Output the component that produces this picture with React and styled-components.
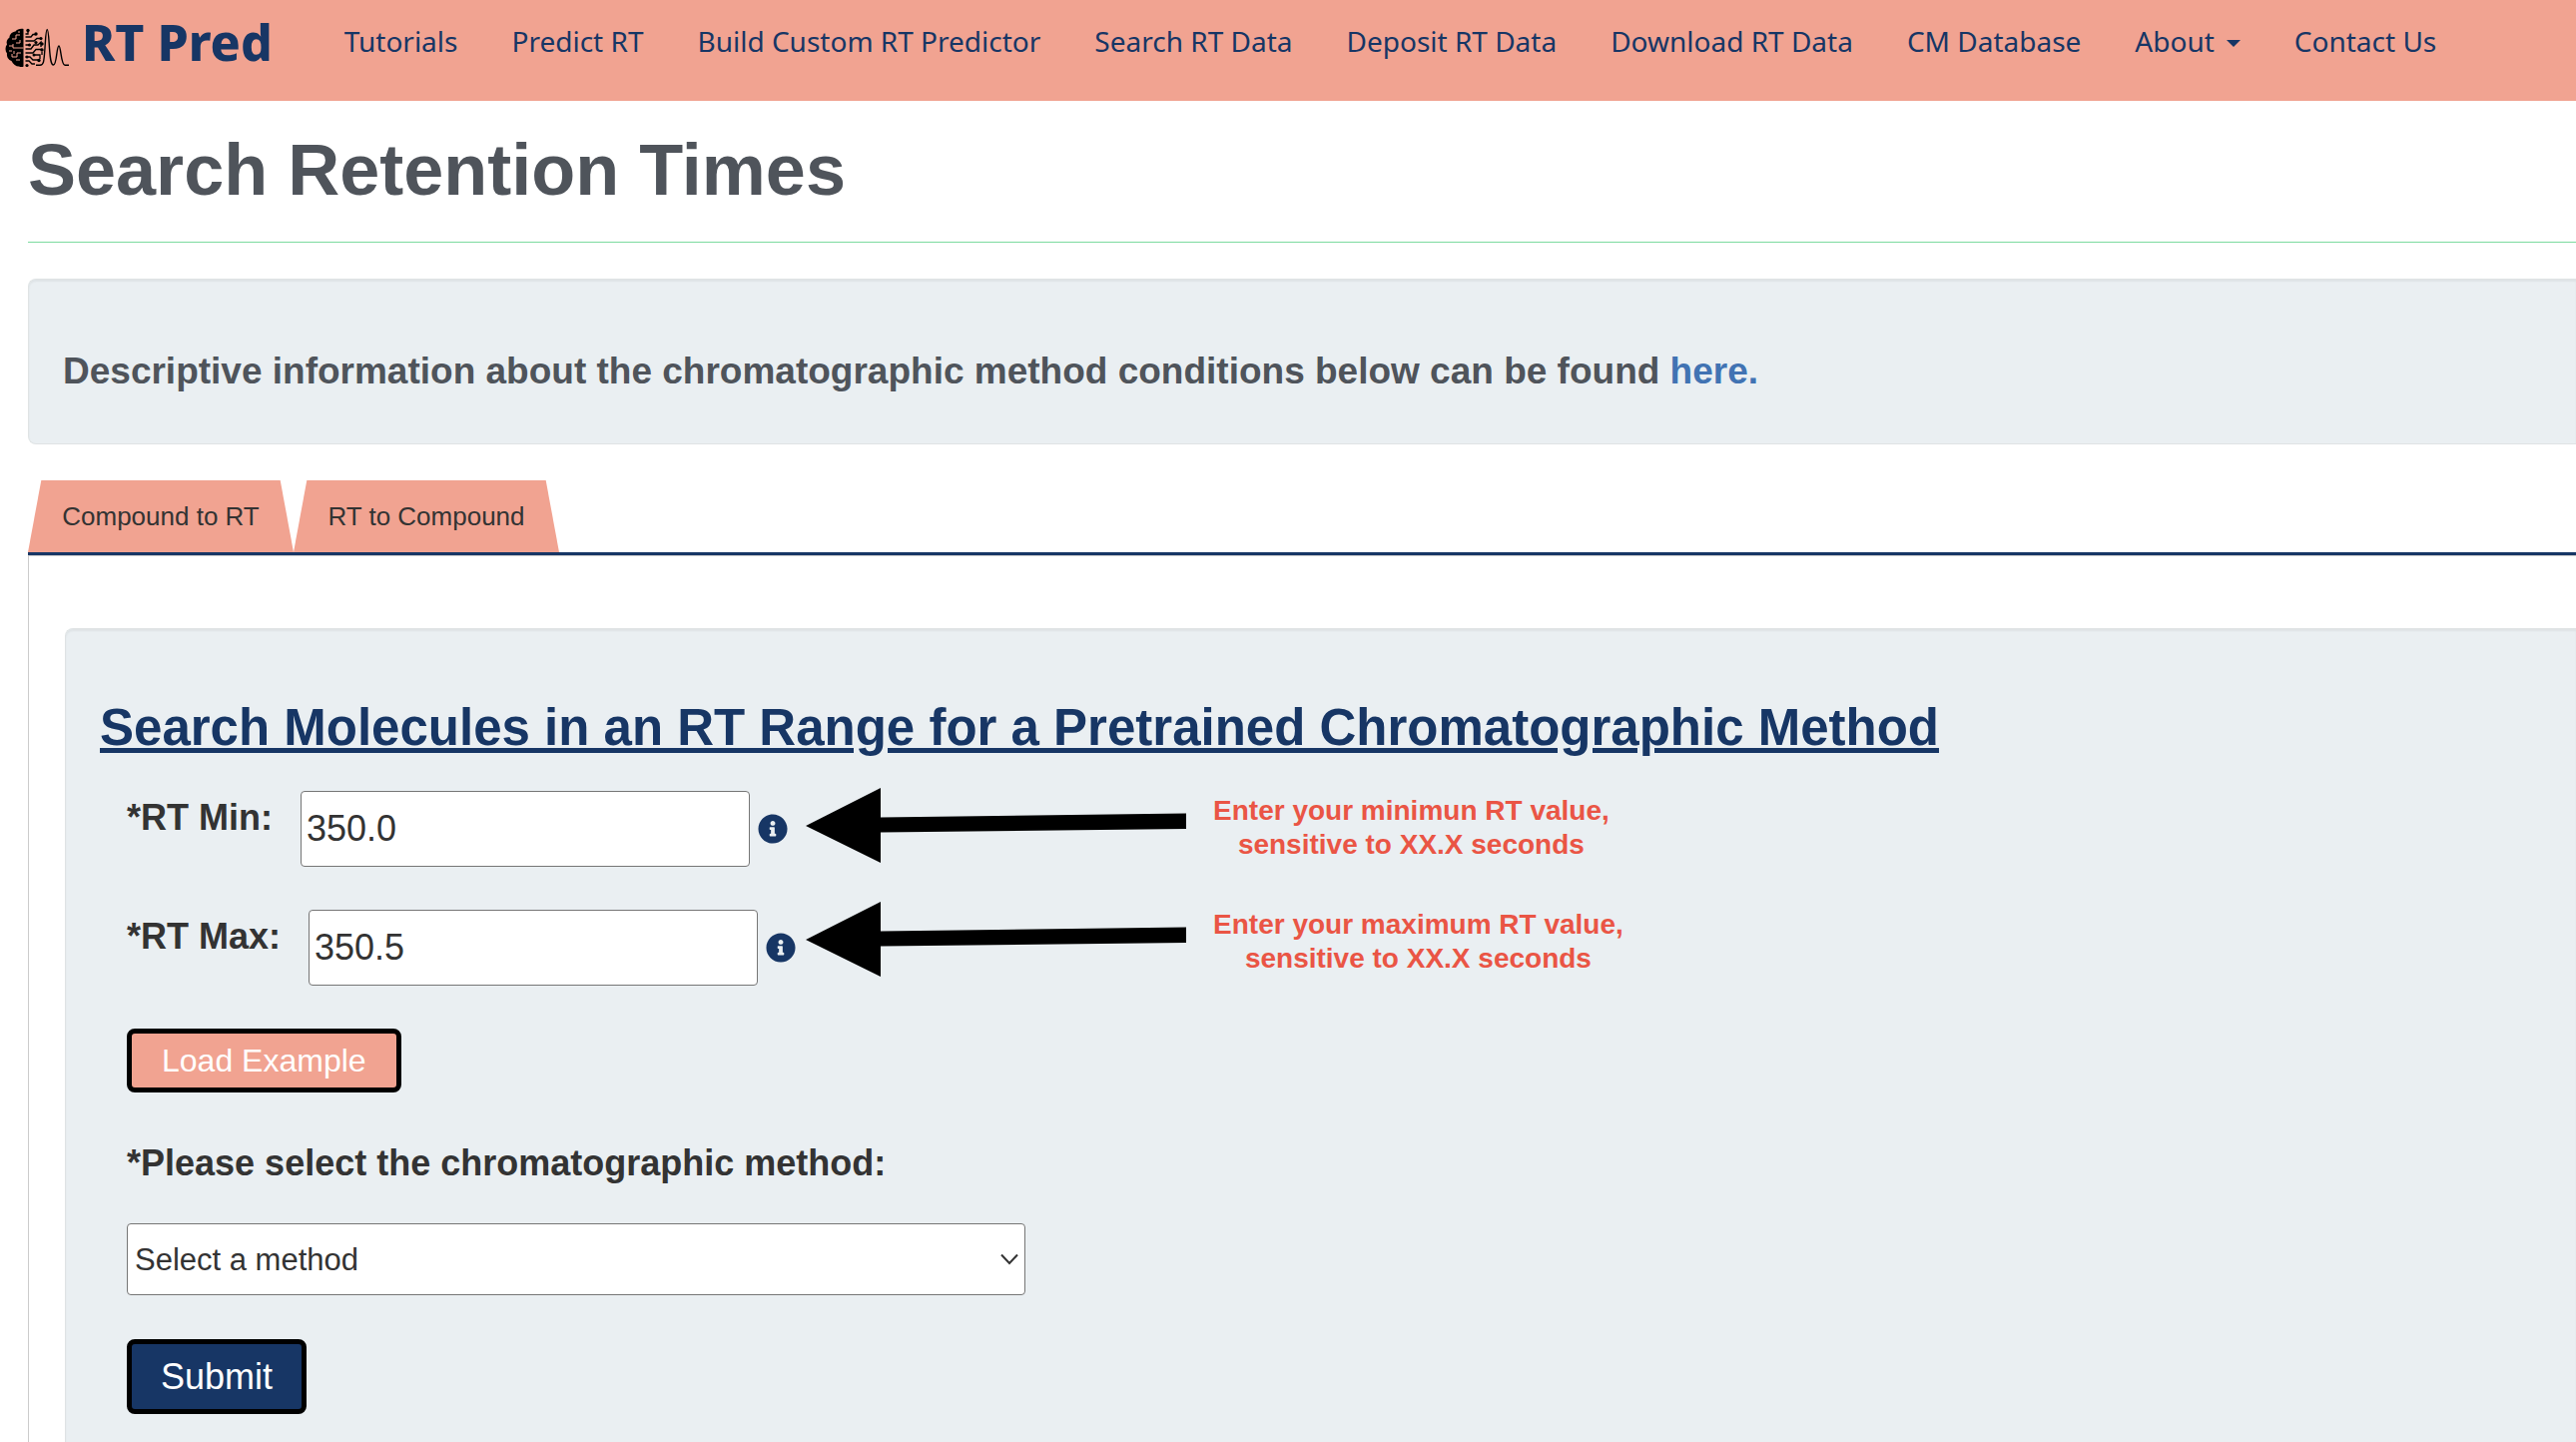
import styled, { createGlobalStyle } from "styled-components";
import { FaInfoCircle } from "react-icons/fa";

const links = [
    "Tutorials",
    "Predict RT",
    "Build Custom RT Predictor",
    "Search RT Data",
    "Deposit RT Data",
    "Download RT Data",
    "CM Database",
    "About",
    "Contact Us",
];

export default function App() {
    return (
        <>
            <GlobalStyle />
            <Page>
                <Header>
                    <Brand href="#">
                        <Logo />
                        RT Pred
                    </Brand>
                    <Nav>
                        {links.map((label) => (
                            <NavLink href="#" key={label}>
                                {label}
                                {label === "About" && <Caret />}
                            </NavLink>
                        ))}
                    </Nav>
                </Header>

                <Main>
                    <Title>Search Retention Times</Title>
                    <Divider />

                    <Info>
                        Descriptive information about the chromatographic method conditions below can be found <a href="#">here.</a>
                    </Info>

                    <Tabs role="tablist">
                        <Tab role="tab">Compound to RT</Tab>
                        <Tab role="tab">RT to Compound</Tab>
                    </Tabs>

                    <Panel role="tabpanel">
                        <Search>
                            <Subtitle>Search Molecules in an RT Range for a Pretrained Chromatographic Method</Subtitle>

                            <Form onSubmit={(e) => e.preventDefault()}>
                                <Range>
                                    <Fields>
                                        <Field>
                                            <Label htmlFor="rt-min">*RT Min:</Label>
                                            <Input id="rt-min" type="text" defaultValue="350.0" />
                                            <InfoIcon />
                                        </Field>
                                        <Field>
                                            <Label htmlFor="rt-max">*RT Max:</Label>
                                            <Input id="rt-max" type="text" defaultValue="350.5" />
                                            <InfoIcon />
                                        </Field>
                                    </Fields>

                                    <Notes>
                                        <Note>
                                            <Arrow />
                                            <p>
                                                Enter your minimun RT value,
                                                <br />
                                                sensitive to XX.X seconds
                                            </p>
                                        </Note>
                                        <Note>
                                            <Arrow />
                                            <p>
                                                Enter your maximum RT value,
                                                <br />
                                                sensitive to XX.X seconds
                                            </p>
                                        </Note>
                                    </Notes>
                                </Range>

                                <LoadButton type="button">Load Example</LoadButton>

                                <MethodLabel htmlFor="method">*Please select the chromatographic method:</MethodLabel>
                                <SelectBox>
                                    <Select id="method" defaultValue="">
                                        <option value="">Select a method</option>
                                    </Select>
                                    <Chevron viewBox="0 0 20 12">
                                        <path d="M2 1.5 L10 10 L18 1.5" />
                                    </Chevron>
                                </SelectBox>

                                <SubmitButton type="submit">Submit</SubmitButton>
                            </Form>
                        </Search>
                    </Panel>
                </Main>
            </Page>
        </>
    );
}

// half brain, half circuit board, then two chromatogram peaks
function Logo() {
    return (
        <LogoSvg viewBox="0 0 64 40">
            <path
                d="M18.500 1 C15 0.500 12 1.500 10.500 3.500 C7 4 4.500 6.500 4.500 9.500 C2 11 1 14 2 16.500 C0 19 0 23 2 25.500 C1.500 29 3.500 32 6.500 33 C8 36.500 11 38.500 14 38.500 C16 39.500 18 39 18.500 38.500 Z"
                fill="#000"
            />
            <g fill="none" stroke="#f1a391" strokeWidth="1">
                <path d="M18.500 20 H8 M8 20 V16 M4 18 H8" />
                <path d="M15 7 H11 V11 H7 M15 12 V15 H11" />
                <path d="M16 25 H12 V29 H7 V26 M15 32 H11" />
                <path d="M4 23 H7 M9 23 V26 M14 3 V5" />
            </g>
            <g fill="none" stroke="#000" strokeWidth="1.300">
                <path d="M20.500 6 H23 V2.500 M20.500 9 H26 L28 6.500 H31" />
                <path d="M20.500 13 H29 L32 10.500 H36 M20.500 17 H24" />
                <path d="M20.500 21 H26 L29 17 H33 L36 14 V19" />
                <path d="M20.500 25 H28 L31 21.500 H37 M20.500 29 H25 L28 32 H33" />
                <path d="M20.500 33 H24 L27 36 H30 M29 27 H35 V31 M37 24 V27" />
            </g>
            <g fill="#000">
                <circle cx="23" cy="2.500" r="1.700" />
                <circle cx="31" cy="6" r="1.700" />
                <circle cx="36" cy="10.500" r="1.600" />
                <circle cx="24.500" cy="17" r="1.600" />
                <circle cx="31" cy="14.500" r="1.600" />
                <circle cx="37" cy="16" r="1.700" />
                <circle cx="37" cy="22" r="1.700" />
                <circle cx="29" cy="27" r="1.500" />
                <circle cx="34" cy="32.500" r="1.700" />
                <circle cx="22" cy="37.500" r="1.600" />
                <circle cx="22" cy="29" r="1.500" />
            </g>
            <path
                d="M31 37.300 H35 C39 37.300 39 33 40 20 C40.800 8 41 1.500 42.200 1.500 C43.500 1.500 43.800 10 44.500 20 C45.300 31 46 37 48.500 37 C52 37 51.500 18 54 18 C56 18 56 37.300 60 37.300 H64"
                fill="none"
                stroke="#000"
                strokeWidth="1.400"
            />
        </LogoSvg>
    );
}

function Arrow() {
    return (
        <ArrowSvg viewBox="0 0 382 76">
            <path d="M0 38 L75 0 V29.500 L381 25.500 V41 L75 44.500 V75 Z" />
        </ArrowSvg>
    );
}

const GlobalStyle = createGlobalStyle`
    * {
        box-sizing: border-box;
    }

    body {
        margin: 0;
        background-color: #fff;
        color: #333;
        font-family: "Liberation Sans", Arial, sans-serif;
    }
`;

const Page = styled.div`
    display: flex;
    flex-direction: column;
    min-height: 100vh;
`;

const Header = styled.header`
    display: flex;
    align-items: flex-start;
    height: 101px;
    padding: 13px 0 0 5px;
    background-color: #f1a391;
    font-family: "Noto Sans", sans-serif;
`;

const Brand = styled.a`
    display: flex;
    align-items: center;
    gap: 13px;
    margin-right: 72px;
    color: #173665;
    font-size: 50px;
    font-weight: 800;
    line-height: 58px;
    text-decoration: none;
    white-space: nowrap;
`;

const LogoSvg = styled.svg`
    width: 64px;
    height: 40px;
    margin-top: 12px;
`;

const Nav = styled.nav`
    display: flex;
    gap: 54px;
    padding-top: 8px;
`;

const NavLink = styled.a`
    display: flex;
    align-items: center;
    gap: 12px;
    color: #173665;
    font-size: 28px;
    line-height: 40px;
    text-decoration: none;
    white-space: nowrap;
`;

const Caret = styled.span`
    margin-top: 4px;
    border: 7px solid transparent;
    border-top-color: #173665;
    border-bottom: 0;
`;

const Main = styled.main`
    display: flex;
    flex: 1;
    flex-direction: column;
    padding: 29px 0 0 28px;
`;

const Title = styled.h1`
    margin: 0;
    color: #4f545b;
    font-size: 72px;
    line-height: 80px;
`;

const Divider = styled.hr`
    width: 100%;
    margin: 32px 0 36px;
    border: 0;
    border-top: 1px solid #7cdba0;
`;

const Info = styled.p`
    margin: 0 0 36px;
    padding: 71px 34px 51px;
    border: 1px solid #dfe3e4;
    border-right: 0;
    border-radius: 8px 0 0 8px;
    background-color: #eaeff2;
    box-shadow: inset 0 2px 2px rgba(0, 0, 0, 0.05);
    color: #4f545b;
    font-size: 37px;
    font-weight: 600;
    line-height: 42px;

    a {
        color: #4173b3;
        text-decoration: none;
    }
`;

const Tabs = styled.div`
    display: flex;
    border-bottom: 3px solid #173665;
`;

const Tab = styled.button`
    width: 266px;
    height: 72px;
    padding: 0;
    border: 0;
    background-color: #f1a391;
    clip-path: polygon(5% 0, 95% 0, 100% 100%, 0 100%);
    color: #333;
    font-family: inherit;
    font-size: 26px;
`;

const Panel = styled.section`
    display: flex;
    flex: 1;
    flex-direction: column;
    padding: 72px 0 0 36px;
    border-top: 1px solid #ccc;
    border-left: 1px solid #ccc;
`;

const Search = styled.div`
    flex: 1;
    padding: 71px 0 20px 34px;
    border-top: 1px solid #dfe3e4;
    border-left: 1px solid #dfe3e4;
    border-radius: 8px 0 0 0;
    background-color: #eaeff2;
    box-shadow: inset 0 2px 2px rgba(0, 0, 0, 0.05);
`;

const Subtitle = styled.h2`
    margin: 0 0 35px;
    color: #173665;
    font-size: 51px;
    line-height: 56px;
    text-decoration: underline;
`;

const Form = styled.form`
    display: flex;
    flex-direction: column;
    align-items: flex-start;
    padding-left: 27px;
`;

const Range = styled.div`
    display: flex;
    gap: 10px;
    margin-bottom: 43px;
`;

const Fields = styled.div`
    display: flex;
    flex-direction: column;
    gap: 43px;
`;

const Field = styled.div`
    display: flex;
    align-items: center;
`;

const Label = styled.label`
    align-self: flex-start;
    margin-right: 28px;
    font-size: 36px;
    font-weight: 700;
    line-height: 54px;
`;

const Input = styled.input`
    width: 450px;
    height: 76px;
    margin-right: 8px;
    padding: 0 5px;
    border: 1px solid #767676;
    border-radius: 4px;
    background-color: #fff;
    color: #333;
    font-family: inherit;
    font-size: 36px;
`;

const InfoIcon = styled(FaInfoCircle)`
    width: 30px;
    height: 30px;
    color: #173665;
`;

const Notes = styled.div`
    display: flex;
    flex-direction: column;
    gap: 38px;
    margin-top: -3px;
`;

const Note = styled.div`
    display: flex;
    align-items: center;
    gap: 26px;

    p {
        margin: 0;
        padding-top: 4px;
        color: #ea5545;
        font-size: 28px;
        font-weight: 700;
        line-height: 34px;
        text-align: center;
    }
`;

const ArrowSvg = styled.svg`
    width: 382px;
    height: 76px;
`;

const LoadButton = styled.button`
    height: 64px;
    padding: 0 30px;
    border: 5px solid #000;
    border-radius: 8px;
    background-color: #f1a391;
    color: #fff;
    font-family: inherit;
    font-size: 32px;
`;

const MethodLabel = styled.label`
    margin: 51px 0 40px;
    font-size: 36px;
    font-weight: 700;
    line-height: 40px;
`;

const SelectBox = styled.div`
    position: relative;
    width: 900px;
    margin-bottom: 44px;
`;

const Select = styled.select`
    width: 100%;
    height: 72px;
    padding: 0 7px;
    border: 1px solid #767676;
    border-radius: 4px;
    appearance: none;
    background-color: #fff;
    color: #333;
    font-family: inherit;
    font-size: 31px;
`;

const Chevron = styled.svg`
    position: absolute;
    top: 30px;
    right: 6px;
    width: 20px;
    height: 12px;
    fill: none;
    stroke: #333;
    stroke-width: 2;
    pointer-events: none;
`;

const SubmitButton = styled(LoadButton)`
    height: 75px;
    padding: 0 29px;
    background-color: #173665;
    font-size: 36px;
`;
